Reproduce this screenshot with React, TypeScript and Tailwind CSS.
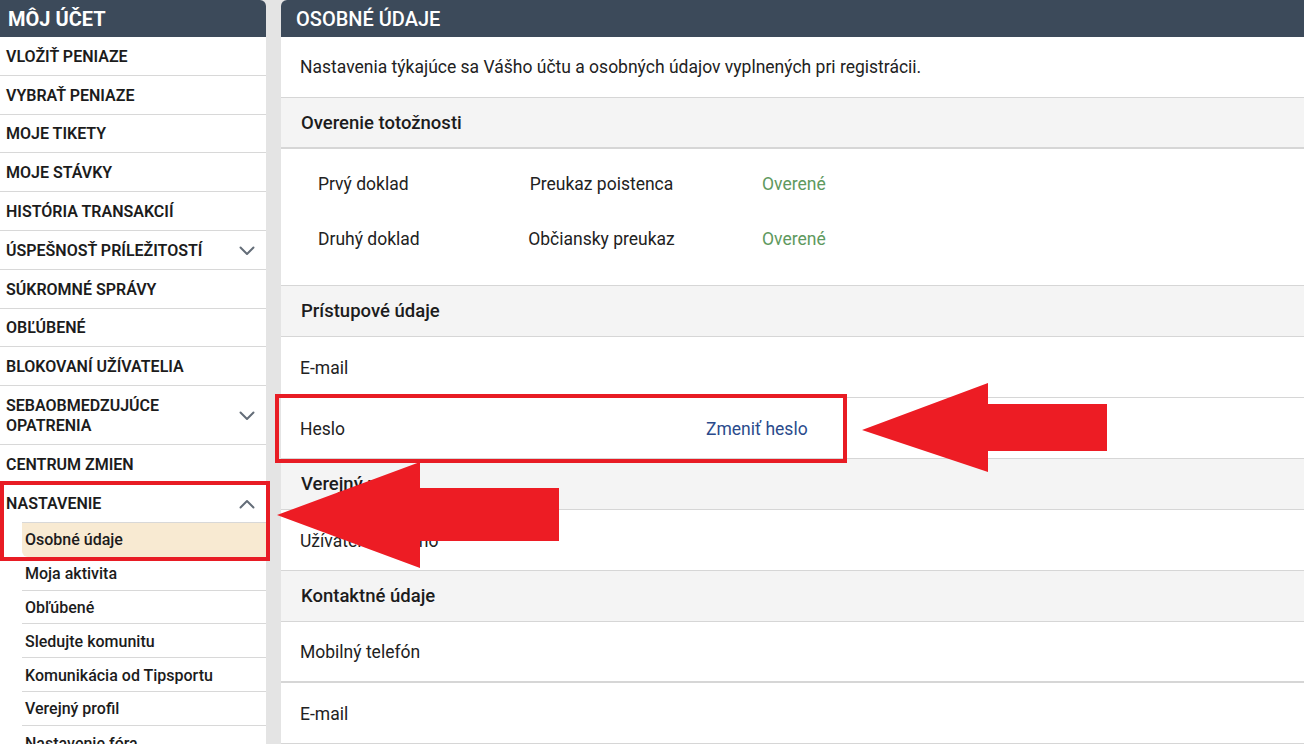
import React from "react";

const Chevron = ({ up = false }: { up?: boolean }) => (
  <svg width="16" height="10" viewBox="0 0 16 10" className="shrink-0">
    <path
      d={up ? "M1.5 8.5 L8 2 L14.5 8.5" : "M1.5 1.5 L8 8 L14.5 1.5"}
      fill="none"
      stroke="#646d78"
      strokeWidth="2"
      strokeLinecap="round"
      strokeLinejoin="round"
    />
  </svg>
);

const mainItems: { label: React.ReactNode; chevron?: boolean; double?: boolean }[] = [
  { label: "VLOŽIŤ PENIAZE" },
  { label: "VYBRAŤ PENIAZE" },
  { label: "MOJE TIKETY" },
  { label: "MOJE STÁVKY" },
  { label: "HISTÓRIA TRANSAKCIÍ" },
  { label: "ÚSPEŠNOSŤ PRÍLEŽITOSTÍ", chevron: true },
  { label: "SÚKROMNÉ SPRÁVY" },
  { label: "OBĽÚBENÉ" },
  { label: "BLOKOVANÍ UŽÍVATELIA" },
  { label: "SEBAOBMEDZUJÚCE OPATRENIA", chevron: true, double: true },
  { label: "CENTRUM ZMIEN" },
];

const subItems = [
  "Moja aktivita",
  "Obľúbené",
  "Sledujte komunitu",
  "Komunikácia od Tipsportu",
  "Verejný profil",
  "Nastavenie fóra",
];

function Sidebar() {
  return (
    <div className="w-[266px] shrink-0 bg-white rounded-tr-[6px] overflow-hidden">
      <div className="h-[37px] bg-[#3c4a5a] flex items-center pl-[8px] text-white text-[20px] font-bold leading-none">
        MÔJ ÚČET
      </div>
      {mainItems.map((it, i) => (
        <div
          key={i}
          className={`flex items-center justify-between border-b border-[#d8d8d8] pl-[6px] pr-[11px] pt-[2px] ${
            it.double ? "h-[59px]" : "h-[38.8px]"
          }`}
        >
          <span className={`text-[16px] font-semibold text-[#1c1c1c] leading-[20px] ${it.double ? "w-[190px]" : ""}`}>
            {it.label}
          </span>
          {it.chevron && <Chevron />}
        </div>
      ))}
      <div className="flex items-center justify-between h-[38px] pl-[6px] pr-[11px] pt-[2px]">
        <span className="text-[16px] font-semibold text-[#1c1c1c]">NASTAVENIE</span>
        <Chevron up />
      </div>
      <div className="ml-[22px]">
        <div className="h-[35px] flex items-center pl-[3px] pt-[1px] bg-[#f8ead2] border-t border-[#d8d8d8] rounded-bl-[6px] text-[16px] font-medium text-[#1c1c1c]">
          Osobné údaje
        </div>
        {subItems.map((s, i) => (
          <div
            key={i}
            className={`h-[33.75px] flex items-center pl-[3px] pt-[2px] text-[16px] font-medium text-[#1c1c1c] ${
              i < subItems.length - 1 ? "border-b border-[#d8d8d8]" : ""
            }`}
          >
            {s}
          </div>
        ))}
      </div>
    </div>
  );
}

const SectionHeader = ({ children, thick = false }: { children: React.ReactNode; thick?: boolean }) => (
  <div
    className={`h-[51px] bg-[#f4f4f4] flex items-center pl-[20px] pt-[2px] text-[18.5px] font-medium text-[#1c1c1c] border-b ${
      thick ? "border-b-2" : ""
    } border-[#d6d6d6]`}
  >
    {children}
  </div>
);

const Row = ({ children, thick = false }: { children: React.ReactNode; thick?: boolean }) => (
  <div
    className={`h-[61px] flex items-center pl-[19px] pt-[2px] text-[17.5px] text-[#222] border-b ${
      thick ? "border-b-2" : ""
    } border-[#d6d6d6]`}
  >
    {children}
  </div>
);

function Content() {
  return (
    <div className="flex-1 bg-white rounded-tl-[6px] overflow-hidden">
      <div className="h-[37px] bg-[#3c4a5a] flex items-center pl-[15px] text-white text-[20px] font-medium leading-none">
        OSOBNÉ ÚDAJE
      </div>
      <div className="h-[61px] flex items-center pl-[19px] pt-[1px] text-[17.5px] text-[#222] border-b border-[#d6d6d6]">
        Nastavenia týkajúce sa Vášho účtu a osobných údajov vyplnených pri registrácii.
      </div>
      <SectionHeader thick>Overenie totožnosti</SectionHeader>
      <div className="h-[137px] flex flex-col pt-[24px] gap-[33px] border-b border-[#d6d6d6] text-[17.5px] text-[#222]">
        {[
          ["Prvý doklad", "Preukaz poistenca"],
          ["Druhý doklad", "Občiansky preukaz"],
        ].map(([a, b], i) => (
          <div key={i} className="flex items-center h-[22px]">
            <span className="w-[200px] pl-[37px]">{a}</span>
            <span className="w-[241px] text-center">{b}</span>
            <span className="ml-[40px] text-[#5e995e]">Overené</span>
          </div>
        ))}
      </div>
      <SectionHeader>Prístupové údaje</SectionHeader>
      <Row>E-mail</Row>
      <Row>
        <span className="w-[406px]">Heslo</span>
        <span className="text-[#2b4b8c]">Zmeniť heslo</span>
      </Row>
      <SectionHeader>Verejný profil</SectionHeader>
      <Row>Užívateľské meno</Row>
      <SectionHeader>Kontaktné údaje</SectionHeader>
      <Row thick>Mobilný telefón</Row>
      <Row>E-mail</Row>
    </div>
  );
}

export default function App() {
  return (
    <div
      className="relative w-[1304px] h-[744px] overflow-hidden bg-[#e4e4e4] flex gap-[15px]"
      style={{ fontFamily: "Roboto, 'Noto Sans', sans-serif" }}
    >
      <Sidebar />
      <Content />

      {/* annotation boxes */}
      <div className="absolute left-[275px] top-[394px] w-[572px] h-[69px] border-[4px] border-[#e81c24] pointer-events-none" />
      <div className="absolute left-[0px] top-[481px] w-[270px] h-[80px] border-[4px] border-[#e81c24] pointer-events-none" />

      {/* arrows */}
      <svg className="absolute left-0 top-0 pointer-events-none" width="1304" height="744" viewBox="0 0 1304 744">
        <polygon points="862,430 988,383 988,404 1107,404 1107,451 988,451 988,472" fill="#ed1c24" />
        <polygon points="277,515 420,462 420,488 559,488 559,541 420,541 420,568" fill="#ed1c24" />
      </svg>
    </div>
  );
}
